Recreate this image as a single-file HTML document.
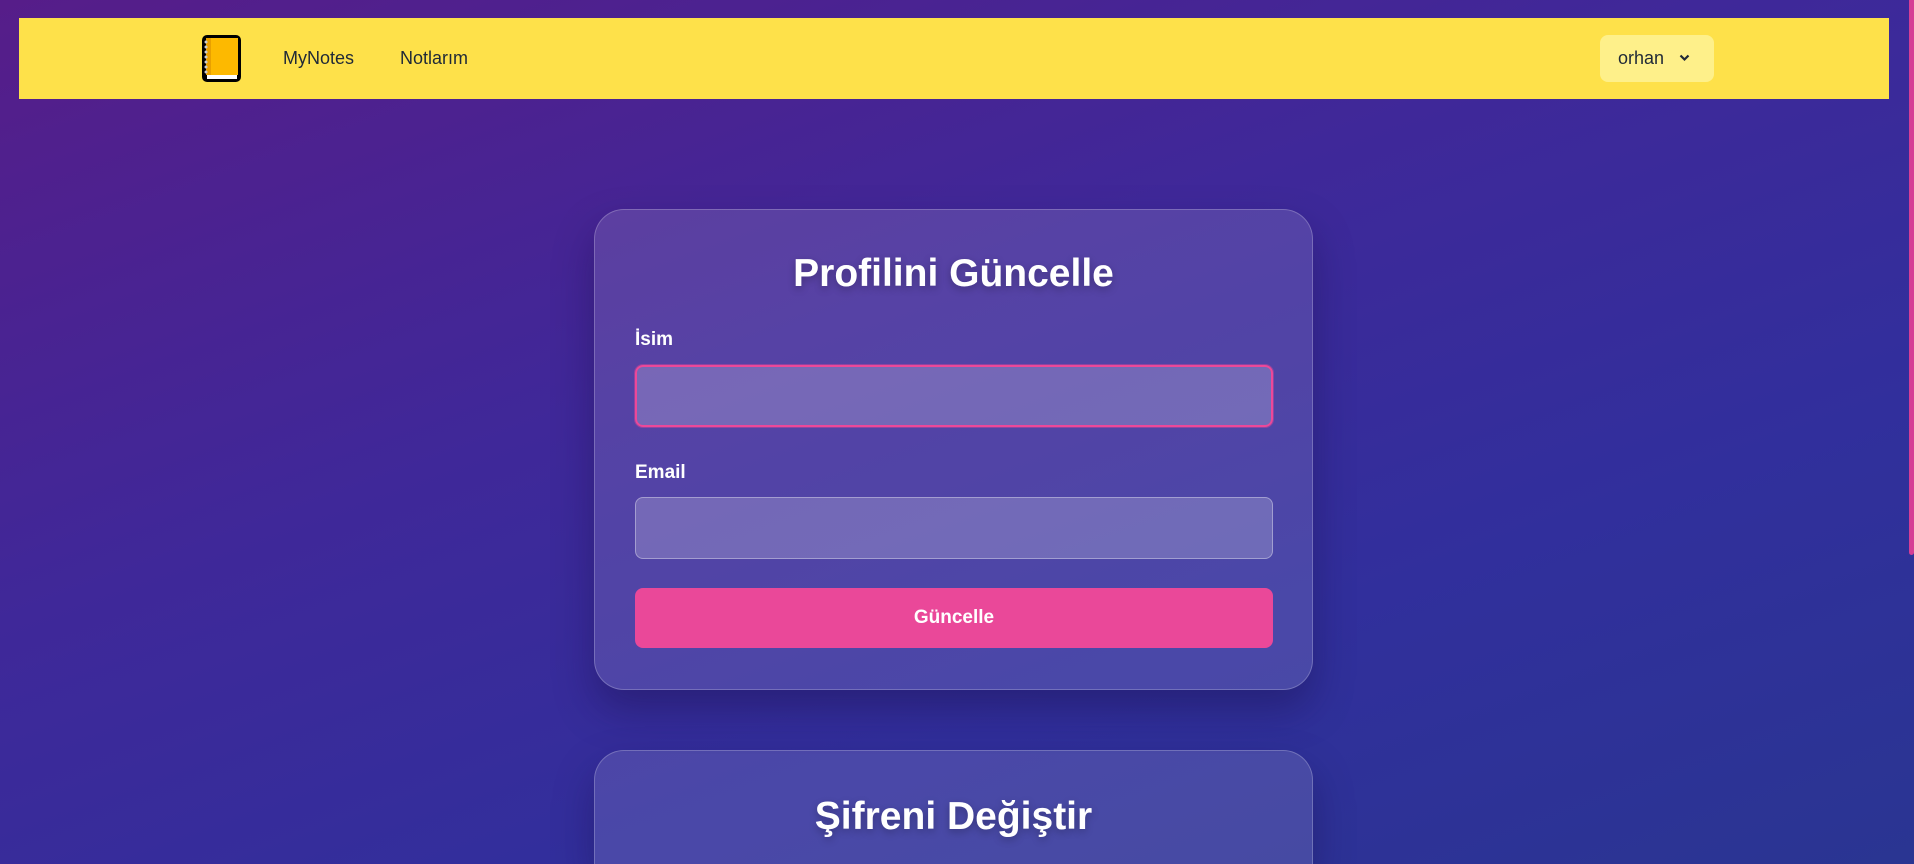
<!DOCTYPE html>
<html><head><meta charset="utf-8"><style>
*{box-sizing:border-box;margin:0;padding:0}
html,body{width:1914px;height:864px;overflow:hidden}
body{font-family:"Liberation Sans",sans-serif;background:linear-gradient(160deg,#561d89 0%,#3f2899 40%,#312f9c 70%,#2a3592 100%);position:relative}
.nav{position:absolute;left:19px;top:18px;width:1870px;height:81px;background:#fee14a}
.nav a{position:absolute;top:30px;font-size:18px;color:#1f2937;text-decoration:none}
.user{position:absolute;left:1581px;top:17px;width:114px;height:47px;background:#fef08a;border-radius:8px;font-size:18px;color:#1f2937;padding:13px 0 0 18px}
.card{position:absolute;left:594px;width:719px;background:rgba(255,255,255,0.12);border:1px solid rgba(255,255,255,0.22);border-radius:30px;box-shadow:0 20px 40px rgba(20,10,60,0.35)}
.card h2{position:absolute;left:0;right:0;text-align:center;color:#fff;font-size:39px;font-weight:bold;text-shadow:0 3px 8px rgba(0,0,0,0.25)}
.lbl{position:absolute;left:40px;color:#fff;font-size:19px;font-weight:bold}
.inp{position:absolute;left:40px;width:638px;height:62px;background:rgba(255,255,255,0.2);border:1px solid rgba(255,255,255,0.35);border-radius:8px}
.btn{position:absolute;left:40px;width:638px;height:60px;background:#ea4899;border-radius:8px;color:#fff;font-weight:bold;font-size:19px;text-align:center;line-height:60px}
.sb{position:absolute;left:1909px;top:0;width:5px;height:555px;background:#d63d95;border-radius:0 0 3px 3px}
</style></head><body>
<div class="nav">
<svg style="position:absolute;left:181px;top:15px" width="43" height="51" viewBox="0 0 43 51">
<rect x="2" y="2" width="39" height="47" rx="5" fill="#000"/>
<rect x="6" y="5" width="32" height="37" fill="#fdb900"/>
<rect x="6" y="5" width="5" height="37" fill="#e9a000"/>
<rect x="7" y="42" width="30" height="4" fill="#fff"/>
<g fill="#ccc"><circle cx="6" cy="9" r="1.5"/><circle cx="6" cy="14" r="1.5"/><circle cx="6" cy="19" r="1.5"/><circle cx="6" cy="24" r="1.5"/><circle cx="6" cy="29" r="1.5"/><circle cx="6" cy="34" r="1.5"/><circle cx="6" cy="39" r="1.5"/></g>
</svg>
<a style="left:264px">MyNotes</a>
<a style="left:381px">Notlarım</a>
<div class="user">orhan <svg style="margin-left:10px;vertical-align:2px" width="11" height="8" viewBox="0 0 11 8"><path d="M1.5 1.5l4 4 4-4" stroke="#1f2937" stroke-width="2.2" fill="none"/></svg></div>
</div>
<div class="card" style="top:209px;height:481px">
<h2 style="top:42px">Profilini Güncelle</h2>
<div class="lbl" style="top:119px">İsim</div>
<div class="inp" style="top:155px;border:2px solid #ec4899;box-shadow:0 0 0 1px rgba(236,72,153,0.4)"></div>
<div class="lbl" style="top:252px">Email</div>
<div class="inp" style="top:287px"></div>
<div class="btn" style="top:378px">Güncelle</div>
</div>
<div class="card" style="top:750px;height:114px;border-bottom:none;border-radius:30px 30px 0 0">
<h2 style="top:44px">Şifreni Değiştir</h2>
</div>
<div class="sb"></div>
</body></html>
